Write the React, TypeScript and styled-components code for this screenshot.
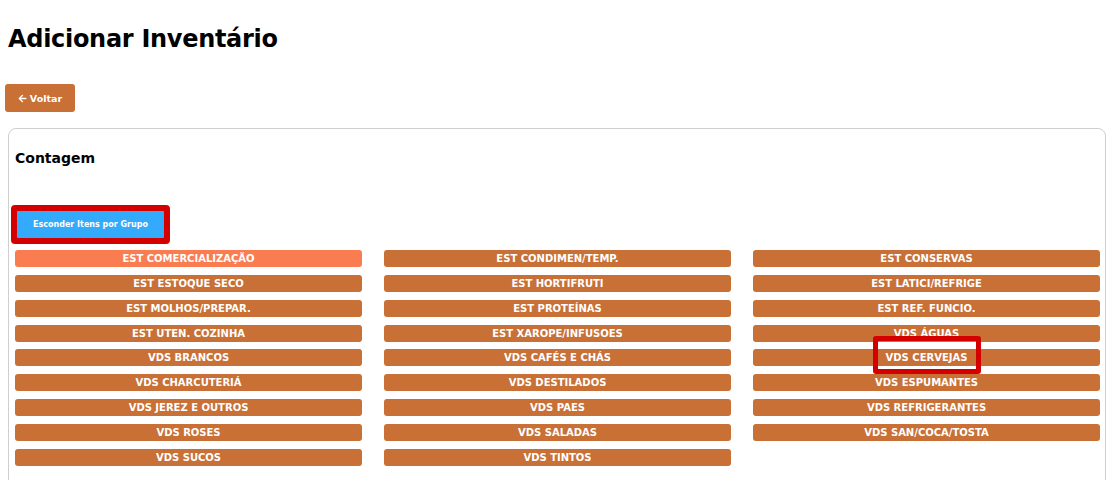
import React from "react";
import styled, { createGlobalStyle } from "styled-components";
import { FaArrowLeft } from "react-icons/fa";

const Global = createGlobalStyle`
  html, body { margin: 0; padding: 0; background: #fff; }
  body { font-family: "DejaVu Sans", "Open Sans", sans-serif; color: #111; }
  * { box-sizing: border-box; }
`;

const Page = styled.div`
  padding: 0 1px 0 8px;
  height: 480px;
  overflow: hidden;
`;

const Title = styled.h1`
  margin: 0;
  padding-top: 23px;
  font-family: "DejaVu Sans", sans-serif;
  font-weight: 700;
  font-size: 24px;
  line-height: 32px;
  letter-spacing: -0.3px;
  color: #000;
`;

const BackButton = styled.button`
  margin: 29px 0 0 -3px;
  width: 70px;
  height: 28px;
  border: none;
  border-radius: 3px;
  background: #c87035;
  color: #fff;
  font-family: "DejaVu Sans", sans-serif;
  font-weight: 700;
  font-size: 9.5px;
  display: flex;
  align-items: center;
  justify-content: center;
  gap: 3px;
  padding: 0;
`;

const Card = styled.section`
  margin-top: 16px;
  border: 1px solid #cfcfcf;
  border-radius: 8px;
  padding: 20px 5px 20px 6px;
  height: 360px;
`;

const CardTitle = styled.h2`
  margin: 0;
  font-family: "DejaVu Sans", sans-serif;
  font-weight: 700;
  font-size: 14px;
  line-height: 18px;
  color: #000;
`;

const Highlight = styled.span`
  display: inline-block;
  margin: 38px 0 0 -4px;
  border: 5px solid #d40000;
  border-radius: 4px;
  padding: 1px;
  background: #d40000;
`;

const ToggleButton = styled.button`
  display: block;
  width: 147px;
  height: 27px;
  border: none;
  border-radius: 1px;
  background: #33aafc;
  color: #fff;
  font-family: "DejaVu Sans", sans-serif;
  font-weight: 700;
  font-size: 8px;
  padding: 0;
`;

const Grid = styled.div`
  margin-top: 6px;
  display: grid;
  grid-template-columns: repeat(3, 347px);
  column-gap: 22px;
  row-gap: 7.85px;
`;

const Cell = styled.div`
  position: relative;
`;

const GroupButton = styled.button<{ $active?: boolean }>`
  display: block;
  width: 100%;
  height: 17px;
  border: none;
  border-radius: 3px;
  background: ${(p) => (p.$active ? "#f97d50" : "#c87035")};
  color: #fff;
  font-family: "DejaVu Sans", sans-serif;
  font-weight: 700;
  font-size: 10px;
  line-height: 17px;
  padding: 0;
  text-transform: uppercase;
`;

const Mark = styled.span`
  position: absolute;
  top: -13px;
  left: 120px;
  width: 108px;
  height: 38px;
  border: 5px solid #d40000;
  border-radius: 3px;
  pointer-events: none;
`;

const cols = [
  [
    "EST COMERCIALIZAÇÃO",
    "EST ESTOQUE SECO",
    "EST MOLHOS/PREPAR.",
    "EST UTEN. COZINHA",
    "VDS BRANCOS",
    "VDS CHARCUTERIÁ",
    "VDS JEREZ E OUTROS",
    "VDS ROSES",
    "VDS SUCOS",
  ],
  [
    "EST CONDIMEN/TEMP.",
    "EST HORTIFRUTI",
    "EST PROTEÍNAS",
    "EST XAROPE/INFUSOES",
    "VDS CAFÉS E CHÁS",
    "VDS DESTILADOS",
    "VDS PAES",
    "VDS SALADAS",
    "VDS TINTOS",
  ],
  [
    "EST CONSERVAS",
    "EST LATICI/REFRIGE",
    "EST REF. FUNCIO.",
    "VDS ÁGUAS",
    "VDS CERVEJAS",
    "VDS ESPUMANTES",
    "VDS REFRIGERANTES",
    "VDS SAN/COCA/TOSTA",
  ],
];

const rows: (string | null)[] = [];
for (let r = 0; r < 9; r++) {
  for (let c = 0; c < 3; c++) {
    rows.push(cols[c][r] ?? null);
  }
}

export default function App() {
  return (
    <>
      <Global />
      <Page>
        <Title>Adicionar Inventário</Title>
        <BackButton>
          <FaArrowLeft size={9} />
          Voltar
        </BackButton>
        <Card>
          <CardTitle>Contagem</CardTitle>
          <Highlight>
            <ToggleButton>Esconder Itens por Grupo</ToggleButton>
          </Highlight>
          <Grid>
            {rows.map((label, i) =>
              label ? (
                <Cell key={i}>
                  <GroupButton $active={label === "EST COMERCIALIZAÇÃO"}>{label}</GroupButton>
                  {label === "VDS CERVEJAS" && <Mark />}
                </Cell>
              ) : (
                <Cell key={i} />
              )
            )}
          </Grid>
        </Card>
      </Page>
    </>
  );
}
